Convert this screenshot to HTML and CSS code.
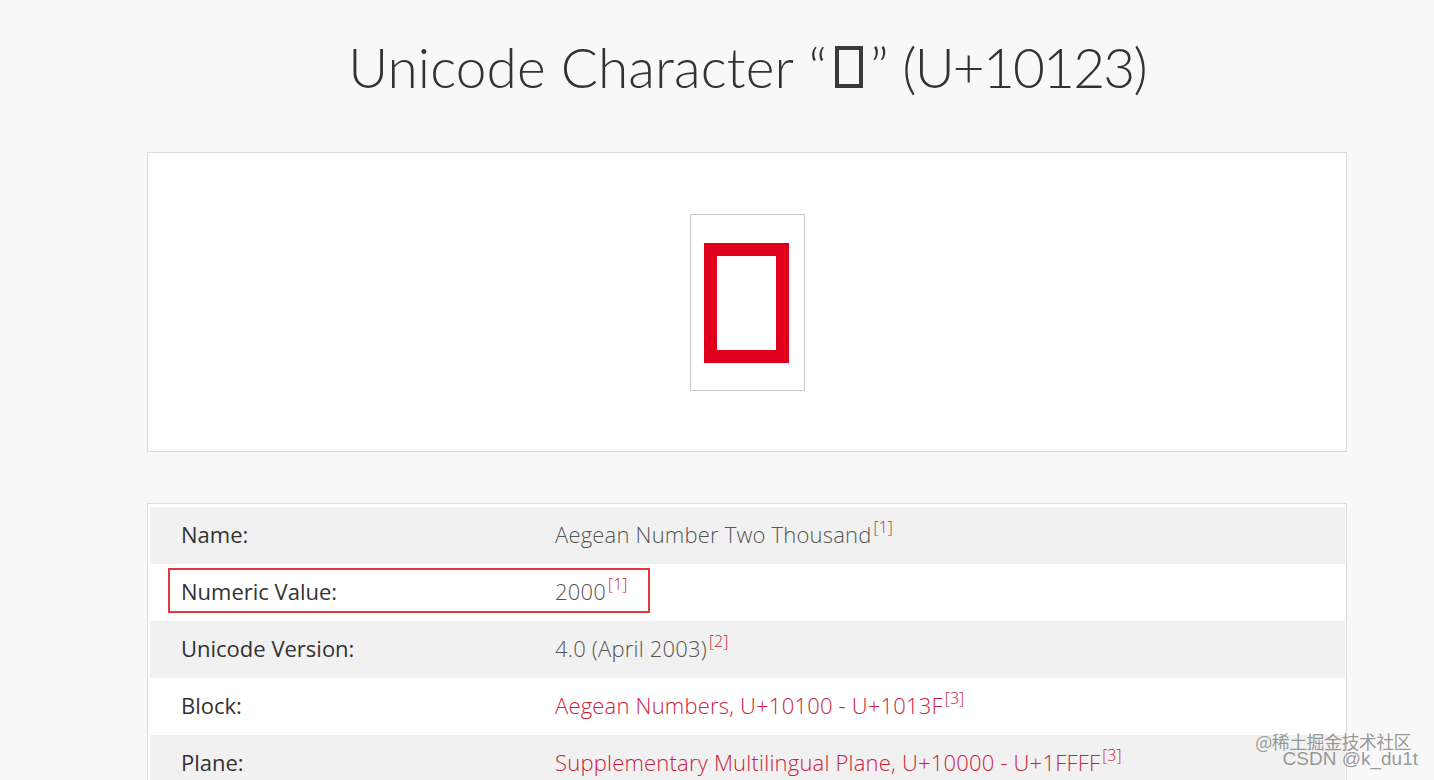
FILE: index.html
```html
<!DOCTYPE html>
<html lang="en">
<head>
<meta charset="utf-8">
<title>Unicode Character U+10123</title>
<link rel="stylesheet" href="styles.css">
</head>
<body>
<div class="page">
  <h1 class="title"><span class="t-name">Unicode Character</span> “<span class="tofu" aria-label="U+10123"></span>” <span class="t-code">(U+10123)</span></h1>

  <div class="glyph-card">
    <div class="glyph-box">
      <svg class="glyph-svg" width="85" height="120" viewBox="0 0 85 120" aria-hidden="true">
        <rect x="6.5" y="6.5" width="72" height="107" fill="none" stroke="#e0001b" stroke-width="13"/>
      </svg>
    </div>
  </div>

  <div class="info">
    <table class="info-table">
      <tr class="odd">
        <td class="label">Name:</td>
        <td class="value">Aegean Number Two Thousand<sup>[1]</sup></td>
      </tr>
      <tr>
        <td class="label">Numeric Value:</td>
        <td class="value">2000<sup>[1]</sup></td>
      </tr>
      <tr class="odd">
        <td class="label">Unicode Version:</td>
        <td class="value">4.0 (April 2003)<sup>[2]</sup></td>
      </tr>
      <tr>
        <td class="label">Block:</td>
        <td class="value"><a href="#">Aegean Numbers, U+10100 - U+1013F</a><sup>[3]</sup></td>
      </tr>
      <tr class="odd">
        <td class="label">Plane:</td>
        <td class="value"><a href="#">Supplementary Multilingual Plane, U+10000 - U+1FFFF</a><sup>[3]</sup></td>
      </tr>
    </table>
    <div class="highlight"></div>
  </div>
</div>
<div class="watermark">
  <span class="wm1">@稀土掘金技术社区</span>
  <span class="wm2">CSDN @k_du1t</span>
</div>
</body>
</html>
```

FILE: styles.css
```css
html, body {
  margin: 0;
  padding: 0;
}
body {
  background: #f8f8f8;
  font-family: "Open Sans", "Liberation Sans", sans-serif;
  color: #333;
  overflow: hidden;
  height: 780px;
}
.page {
  width: 1200px;
  margin-left: 147px;
  position: relative;
}
.title {
  margin: 0;
  padding-top: 31px;
  height: 152px;
  box-sizing: border-box;
  text-align: center;
  font-family: Lato, "Open Sans", sans-serif;
  font-weight: 300;
  font-size: 55px;
  line-height: 72px;
  color: #333;
  letter-spacing: -0.3px;
}
.t-name {
  letter-spacing: 0.1px;
}
.t-code {
  letter-spacing: -1.8px;
}
.tofu {
  display: inline-block;
  width: 20px;
  height: 34px;
  border: 4px solid #3a3a3a;
  vertical-align: 0;
  margin: 0 7px 0 8px;
}
.glyph-card {
  height: 300px;
  box-sizing: border-box;
  background: #fff;
  border: 1px solid #dcdcdc;
  display: flex;
  align-items: center;
  justify-content: center;
}
.glyph-box {
  width: 115px;
  height: 177px;
  box-sizing: border-box;
  border: 1px solid #c8c8c8;
  background: #fff;
  display: flex;
  justify-content: center;
  padding-top: 28px;
  padding-right: 1px;
}
.glyph-svg {
  display: block;
}
.info {
  margin-top: 51px;
  position: relative;
  background: #fff;
  border: 1px solid #dcdcdc;
  padding: 3px 1px 0 2px;
}
.info-table {
  width: 100%;
  border-collapse: collapse;
  font-size: 22px;
}
.info-table tr {
  height: 57px;
}
.info-table tr.odd {
  background: #f1f1f1;
}
.info-table td {
  padding: 0 0 4px 0;
  vertical-align: middle;
}
.label {
  width: 374px;
  padding-left: 31px !important;
  color: #333;
  font-weight: 400;
}
.value {
  color: #555;
  font-weight: 300;
  letter-spacing: 0.2px;
}
.value a {
  color: #c8243b;
  text-decoration: none;
}
sup {
  color: #c8243b;
  font-size: 16px;
  font-weight: 300;
  vertical-align: 10px;
  line-height: 0;
  margin-left: 2px;
  letter-spacing: 0;
}
.highlight {
  position: absolute;
  left: 20px;
  top: 64px;
  width: 478px;
  height: 41px;
  border: 2.5px solid #e0393e;
  pointer-events: none;
}
.watermark {
  position: absolute;
  right: 16px;
  bottom: 8px;
  width: 170px;
  height: 42px;
  font-family: "Liberation Sans", "Noto Sans CJK SC", sans-serif;
  color: rgba(120, 120, 120, 0.75);
  pointer-events: none;
}
.wm1 {
  position: absolute;
  right: 7px;
  top: 0;
  font-size: 18px;
  font-family: "Noto Sans CJK SC", sans-serif;
  letter-spacing: -0.6px;
  white-space: nowrap;
  line-height: 22px;
}
.wm2 {
  position: absolute;
  right: 0;
  top: 18px;
  font-size: 19px;
  white-space: nowrap;
  line-height: 22px;
}
```
